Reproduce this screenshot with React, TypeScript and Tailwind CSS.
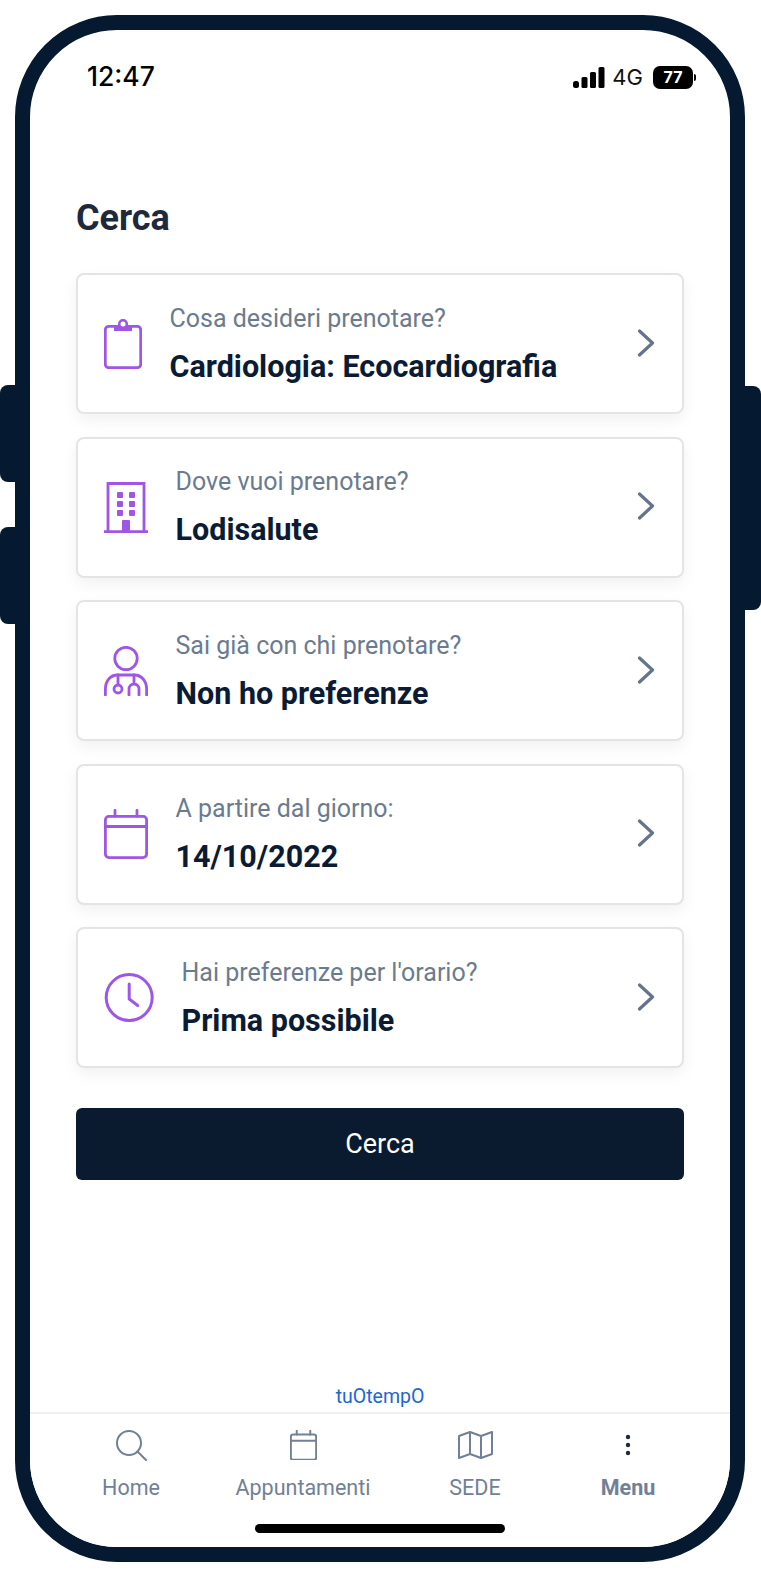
const PURPLE = "#9f56e4";

function ClipboardIcon() {
  return (
    <svg width="38" height="50" viewBox="0 0 38 50" fill="none" className="shrink-0">
      <rect x="1.3" y="7.3" width="35.4" height="41.4" rx="3.5" stroke={PURPLE} strokeWidth="2.8" />
      <path d="M10 6h18v6H10z" fill={PURPLE} />
      <circle cx="19" cy="5" r="3.8" fill="#fff" stroke={PURPLE} strokeWidth="2.6" />
    </svg>
  );
}

function BuildingIcon() {
  return (
    <svg width="44" height="51" viewBox="0 0 44 51" fill="none" className="shrink-0">
      <path d="M4 50V1.5h36V50M0 49.6h44" stroke={PURPLE} strokeWidth="2.8" />
      <path d="M18 49V39a1 1 0 0 1 1-1h6a1 1 0 0 1 1 1v10z" fill={PURPLE} />
      {[10, 19, 28].map((y) => (
        <g key={y} fill={PURPLE}>
          <rect x="13" y={y} width="6" height="6" rx="1" />
          <rect x="25" y={y} width="6" height="6" rx="1" />
        </g>
      ))}
    </svg>
  );
}

function DoctorIcon() {
  return (
    <svg width="44" height="50" viewBox="0 0 44 50" fill="none" stroke={PURPLE} strokeWidth="2.8" strokeLinecap="round" className="shrink-0">
      <circle cx="22" cy="12.5" r="11.2" />
      <path d="M1.4 49v-6c0-8 5-14 12-14h17c7 0 12.2 6 12.2 14v6" />
      <path d="M14 29v9" />
      <circle cx="14" cy="43" r="4" />
      <path d="M30 29v7" />
      <path d="M25 49v-6a5 5 0 0 1 10 0v6" />
    </svg>
  );
}

function CalendarIcon({ size = 44, color = PURPLE, sw = 2.8 }: { size?: number; color?: string; sw?: number }) {
  return (
    <svg width={size} height={(size * 50) / 44} viewBox="0 0 44 50" fill="none" stroke={color} strokeWidth={sw} strokeLinecap="round" className="shrink-0">
      <rect x="1.4" y="7.4" width="41.2" height="41.2" rx="3.5" />
      <path d="M1.4 17.5h41.2M11 1.3v6M33 1.3v6" />
    </svg>
  );
}

function ClockIcon() {
  return (
    <svg width="50" height="50" viewBox="0 0 50 50" fill="none" stroke={PURPLE} strokeWidth="3" strokeLinecap="round" strokeLinejoin="round" className="shrink-0">
      <circle cx="25.2" cy="24.5" r="23" />
      <path d="M25.2 11v15l8.5 6.5" />
    </svg>
  );
}

function Chevron() {
  return (
    <svg width="18" height="28" viewBox="0 0 18 28" fill="none" stroke="#64748b" strokeWidth="3.2" strokeLinecap="round" strokeLinejoin="round" className="mb-[2px] shrink-0">
      <path d="M2.5 2l13 12-13 12" />
    </svg>
  );
}

const rows = [
  { icon: <ClipboardIcon />, label: "Cosa desideri prenotare?", value: "Cardiologia: Ecocardiografia" },
  { icon: <BuildingIcon />, label: "Dove vuoi prenotare?", value: "Lodisalute" },
  { icon: <DoctorIcon />, label: "Sai già con chi prenotare?", value: "Non ho preferenze" },
  { icon: <CalendarIcon />, label: "A partire dal giorno:", value: "14/10/2022" },
  { icon: <ClockIcon />, label: "Hai preferenze per l'orario?", value: "Prima possibile" },
];

function Row({ icon, label, value }: { icon: React.ReactNode; label: string; value: string }) {
  return (
    <div className="flex h-[141px] items-center rounded-lg border-2 border-[#e4e4e6] bg-white pl-[26px] pr-[27px] shadow-[0_6px_16px_rgba(0,0,0,0.06)]">
      {icon}
      <div className="ml-[27.5px] flex-1">
        <p className="text-[25px] leading-[32px] text-[#6b7b8f]">{label}</p>
        <p className="mt-[14px] text-[30.5px] font-bold leading-[36px] text-[#0a1b33]">{value}</p>
      </div>
      <Chevron />
    </div>
  );
}

function NavItem({ label, icon, width, bold }: { label: string; icon: React.ReactNode; width: string; bold?: boolean }) {
  return (
    <div className={`flex flex-col items-center ${width}`}>
      <div className="flex h-[32px] items-center justify-center">{icon}</div>
      <span className={`mt-[13px] text-[21.5px] leading-[28px] text-[#718096] ${bold ? "font-bold" : ""}`}>{label}</span>
    </div>
  );
}

export default function App() {
  return (
    <div className="relative h-[1577px] w-[761px] overflow-hidden bg-white font-['Roboto',sans-serif]">
      {/* side buttons */}
      <div className="absolute left-0 top-[385px] h-[97px] w-[20px] rounded-l-lg bg-[#051a30]" />
      <div className="absolute left-0 top-[527px] h-[97px] w-[20px] rounded-l-lg bg-[#051a30]" />
      <div className="absolute right-0 top-[386px] h-[224px] w-[20px] rounded-r-lg bg-[#051a30]" />

      <div className="absolute left-[15px] top-[15px] flex h-[1547px] w-[730px] flex-col overflow-hidden rounded-[102px] border-[15px] border-[#051a30] bg-white">
        {/* status bar */}
        <div className="flex h-[92px] shrink-0 items-center justify-between pl-[57px] pr-[34px] pt-[2px]">
          <span className="font-['Inter',sans-serif] text-[26.5px] font-medium text-black">12:47</span>
          <div className="flex items-center">
            <svg width="32" height="21" viewBox="0 0 32 21" fill="black">
              <rect x="0" y="14" width="6" height="7" rx="2.5" />
              <rect x="8.5" y="10" width="6" height="11" rx="1.5" />
              <rect x="17" y="5" width="6" height="16" rx="1.5" />
              <rect x="25.5" y="0" width="6" height="21" rx="1.5" />
            </svg>
            <span className="ml-[7px] font-['Inter',sans-serif] text-[22px] leading-none text-[#111]">4G</span>
            <div className="ml-[10px] flex h-[23px] w-[40px] items-center justify-center rounded-[7px] bg-black font-['Inter',sans-serif] text-[16px] font-bold text-white">77</div>
            <div className="ml-[1px] h-[7px] w-[2px] rounded-r-sm bg-black" />
          </div>
        </div>

        {/* search form */}
        <div className="flex flex-1 flex-col px-[46px] pt-[76px]">
          <h1 className="mb-[35px] text-[36px] font-bold leading-[40px] text-[#1e293b]">Cerca</h1>
          <div className="flex flex-col gap-[22.5px]">
            {rows.map((r) => (
              <Row key={r.label} icon={r.icon} label={r.label} value={r.value} />
            ))}
          </div>
          <button className="mt-[40px] h-[72px] rounded-md bg-[#0a1b30] text-[27px] text-white">Cerca</button>
        </div>

        <p className="text-center text-[19.5px] leading-[24px] text-[#1d66d6]">tuOtempO</p>

        {/* bottom nav */}
        <div className="mt-[3px] h-[135px] shrink-0 border-t-2 border-[#f0f0f0] bg-white pl-[15px] pt-[15px]">
          <div className="flex">
            <NavItem
              width="w-[172px]"
              label="Home"
              icon={
                <svg width="31" height="31" viewBox="0 0 31 31" fill="none" stroke="#718096" strokeWidth="2" strokeLinecap="round">
                  <circle cx="13" cy="13" r="12" />
                  <path d="M21.5 21.5l8.5 8.5" />
                </svg>
              }
            />
            <NavItem width="w-[172px]" label="Appuntamenti" icon={<CalendarIcon size={27} color="#718096" sw={3.2} />} />
            <NavItem
              width="w-[172px]"
              label="SEDE"
              icon={
                <svg width="35" height="28" viewBox="0 0 35 28" fill="none" stroke="#718096" strokeWidth="2" strokeLinejoin="round">
                  <path d="M1 5l11-4 11 4 11-4v22l-11 4-11-4-11 4zM12 1v22M23 5v22" />
                </svg>
              }
            />
            <NavItem
              width="w-[134px]"
              bold
              label="Menu"
              icon={
                <svg width="6" height="22" viewBox="0 0 6 22" fill="#1e293b">
                  <circle cx="3" cy="3" r="2.2" />
                  <circle cx="3" cy="11" r="2.2" />
                  <circle cx="3" cy="19" r="2.2" />
                </svg>
              }
            />
          </div>
          <div className="mx-auto mt-[22px] h-[9px] w-[250px] -translate-x-[8px] rounded-full bg-black" />
        </div>
      </div>
    </div>
  );
}
